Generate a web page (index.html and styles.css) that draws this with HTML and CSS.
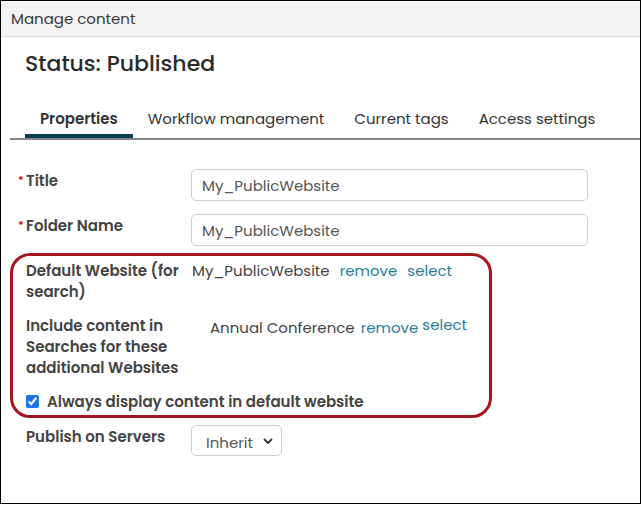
FILE: index.html
```html
<!DOCTYPE html>
<html>
<head>
<meta charset="utf-8">
<link rel="stylesheet" href="styles.css">
</head>
<body>
<div class="dialog">
  <div class="titlebar">Manage content</div>
  <h1 class="status">Status: Published</h1>
  <div class="tabs">
    <div class="tab active">Properties</div>
    <div class="tab">Workflow management</div>
    <div class="tab">Current tags</div>
    <div class="tab">Access settings</div>
  </div>
  <div class="form">
    <div class="row">
      <div class="label"><span class="req">*</span>Title</div>
      <div class="value"><input class="text" type="text" value="My_PublicWebsite"></div>
    </div>
    <div class="row">
      <div class="label"><span class="req">*</span>Folder Name</div>
      <div class="value"><input class="text" type="text" value="My_PublicWebsite"></div>
    </div>
    <div class="highlight">
      <div class="row tight">
        <div class="label">Default Website (for search)</div>
        <div class="value links"><span class="site">My_PublicWebsite</span><a class="link">remove</a><a class="link">select</a></div>
      </div>
      <div class="row tight second">
        <div class="label">Include content in Searches for these additional Websites</div>
        <div class="value links indent"><span class="site">Annual Conference</span><a class="link close">remove</a><a class="link raised">select</a></div>
      </div>
      <label class="check"><input type="checkbox" checked><span>Always display content in default website</span></label>
    </div>
    <div class="row publish">
      <div class="label">Publish on Servers</div>
      <div class="value"><div class="select">Inherit<svg width="10" height="7" viewBox="0 0 10 7"><path d="M1.5 1.5 L5 5 L8.5 1.5" fill="none" stroke="#333" stroke-width="1.8" stroke-linecap="round" stroke-linejoin="round"/></svg></div></div>
    </div>
  </div>
</div>
</body>
</html>
```
FILE: styles.css
```css
* { box-sizing: border-box; }
html, body { margin: 0; padding: 0; background: #fff; }
body { font-family: "Poppins", "Inter", "Open Sans", sans-serif; color: #333; }
.dialog {
  width: 641px;
  height: 504px;
  border: 1px solid #000;
  overflow: hidden;
}
.titlebar {
  height: 36px;
  background: #f3f3f3;
  border-bottom: 1px solid #dcdcdc;
  padding: 6px 0 0 10px;
  font-size: 15px;
  color: #3a3a3a;
}
.status {
  margin: 12px 0 0 24px;
  font-size: 22px;
  font-weight: 500;
  color: #2b2b2b;
  line-height: 30px;
}
.tabs {
  display: flex;
  margin: 30px 0 0 9px;
  padding-left: 15px;
  border-bottom: 2px solid #858585;
}
.tab {
  padding: 0 15px 5px;
  font-size: 15px;
  line-height: 20px;
  color: #333;
  border-bottom: 4px solid transparent;
}
.tab.active { font-weight: 600; border-bottom-color: #0c3b4a; }
.form { padding: 29px 0 0 0; }
.row { display: flex; align-items: flex-start; margin-bottom: 13px; }
.label {
  width: 190px;
  padding-left: 25px;
  padding-right: 8px;
  padding-top: 1px;
  font-size: 15px;
  font-weight: 600;
  line-height: 21px;
  color: #444;
  position: relative;
}
.req {
  color: #d0021b;
  font-size: 11px;
  position: absolute;
  left: 17px;
  top: 1px;
}
.value { flex: 0 0 auto; }
input.text {
  display: block;
  width: 397px;
  height: 32px;
  margin: 0;
  border: 1px solid #cfcfcf;
  border-radius: 5px;
  padding: 0 10px;
  font-family: inherit;
  font-size: 15px;
  color: #555;
}
.form > .row:nth-child(2) { margin-bottom: 7px; }
.highlight {
  margin: 0 0 7px 9px;
  width: 482px;
  border: 3px solid #a3161f;
  border-radius: 20px;
  padding: 4px 0 2px;
}
.highlight .row { margin-bottom: 13px; }
.highlight .label { width: 179px; padding-left: 13px; padding-top: 0; }
.links { font-size: 15px; line-height: 21px; color: #444; display: flex; align-items: flex-start; }
.link { color: #2a7b98; margin-left: 10px; }
.link.close { margin-left: 6px; }
.link.raised { margin-left: 4px; margin-top: -3px; }
.indent { padding-left: 18px; padding-top: 2px; }
.check { display: flex; align-items: center; height: 21px; padding-left: 13px; font-size: 15px; font-weight: 600; color: #444; margin-bottom: 1px; }
.check input { margin: 0 8px 0 0; width: 13px; height: 13px; accent-color: #1a73e8; }
.select {
  width: 91px;
  height: 31px;
  border: 1px solid #cfcfcf;
  border-radius: 5px;
  display: flex;
  align-items: center;
  justify-content: space-between;
  padding: 4px 8px 0 14px;
  font-size: 15px;
  color: #555;
}
.select svg { margin-top: -3px; }
```
